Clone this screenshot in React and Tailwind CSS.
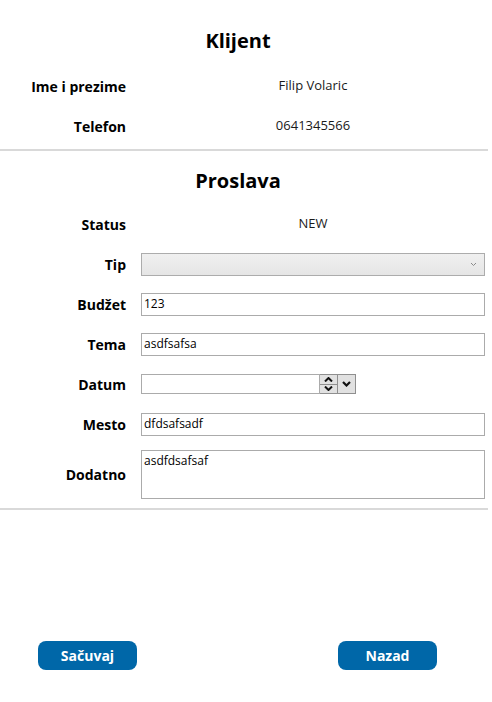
import React from 'react';

const font = { fontFamily: '"Open Sans", "Noto Sans", sans-serif' };

const Row = ({ label, h = 'h-10', children }) => (
  <div className={`flex items-center ${h}`}>
    <div className="w-[126px] shrink-0 text-right text-[14px] font-bold text-black">{label}</div>
    <div className="ml-[15px] w-[344px] flex items-center">{children}</div>
  </div>
);

const TextBox = ({ value }) => (
  <div className="h-[23px] w-full border border-[#ababab] bg-white px-[2px] text-[12px] leading-[19px] text-black">
    {value}
  </div>
);

export default function App() {
  return (
    <div className="w-[492px] h-[702px] bg-white flex flex-col" style={font}>
      <div className="w-[476px] pt-[27px] text-center text-[20px] font-bold leading-[28px] text-black">Klijent</div>
      <div className="mt-[11px]">
        <Row label="Ime i prezime">
          <div className="w-full text-center text-[13px] text-[#1a1a1a]">Filip Volaric</div>
        </Row>
        <Row label="Telefon">
          <div className="w-full text-center text-[13px] text-[#1a1a1a]">0641345566</div>
        </Row>
      </div>
      <div className="mt-[3px] h-[2px] w-[488px] bg-[#d9d9d9]" />

      <div className="w-[476px] pt-[16px] text-center text-[20px] font-bold leading-[28px] text-black">Proslava</div>
      <div className="mt-[9px]">
        <Row label="Status">
          <div className="w-full text-center text-[13px] text-[#1a1a1a]">NEW</div>
        </Row>
        <Row label="Tip">
          <div className="relative h-[23px] w-full border border-[#acacac] bg-gradient-to-b from-[#f0f0f0] to-[#e5e5e5]">
            <svg className="absolute right-[7px] top-[8px]" width="7" height="5" viewBox="0 0 7 5">
              <path d="M1 1 L3.5 3.5 L6 1" fill="none" stroke="#8a8a8a" strokeWidth="1" />
            </svg>
          </div>
        </Row>
        <Row label="Budžet">
          <TextBox value="123" />
        </Row>
        <Row label="Tema">
          <TextBox value="asdfsafsa" />
        </Row>
        <Row label="Datum">
          <div className="flex h-[20px] items-stretch">
            <div className="w-[179px] border border-[#ababab] bg-white" />
            <div className="flex w-[18px] flex-col border-y border-r border-[#8f8f8f] bg-[#e1e1e1]">
              <div className="flex flex-1 items-center justify-center border-b border-[#8f8f8f]">
                <svg width="9" height="5" viewBox="0 0 9 5">
                  <path d="M1 4.5 L4.5 1 L8 4.5" fill="none" stroke="#111" strokeWidth="2" />
                </svg>
              </div>
              <div className="flex flex-1 items-center justify-center">
                <svg width="9" height="5" viewBox="0 0 9 5">
                  <path d="M1 0.5 L4.5 4 L8 0.5" fill="none" stroke="#111" strokeWidth="2" />
                </svg>
              </div>
            </div>
            <div className="flex w-[18px] items-center justify-center border-y border-r border-[#8f8f8f] bg-[#e1e1e1]">
              <svg width="9" height="6" viewBox="0 0 9 6">
                <path d="M1 1 L4.5 4.5 L8 1" fill="none" stroke="#111" strokeWidth="2.2" />
              </svg>
            </div>
          </div>
        </Row>
        <Row label="Mesto">
          <TextBox value="dfdsafsadf" />
        </Row>
        <Row label="Dodatno" h="h-[60px]">
          <div className="h-[49px] w-full border border-[#ababab] bg-white px-[2px] text-[12px] leading-[19px] text-black">
            asdfdsafsaf
          </div>
        </Row>
      </div>
      <div className="mt-[4px] h-[2px] w-[488px] bg-[#d9d9d9]" />

      <div className="mt-[131px] flex">
        <button className="ml-[38px] h-[29px] w-[99px] rounded-[8px] bg-[#0067a8] text-[14px] font-bold text-white">
          Sačuvaj
        </button>
        <button className="ml-[201px] h-[29px] w-[99px] rounded-[8px] bg-[#0067a8] text-[14px] font-bold text-white">
          Nazad
        </button>
      </div>
    </div>
  );
}
